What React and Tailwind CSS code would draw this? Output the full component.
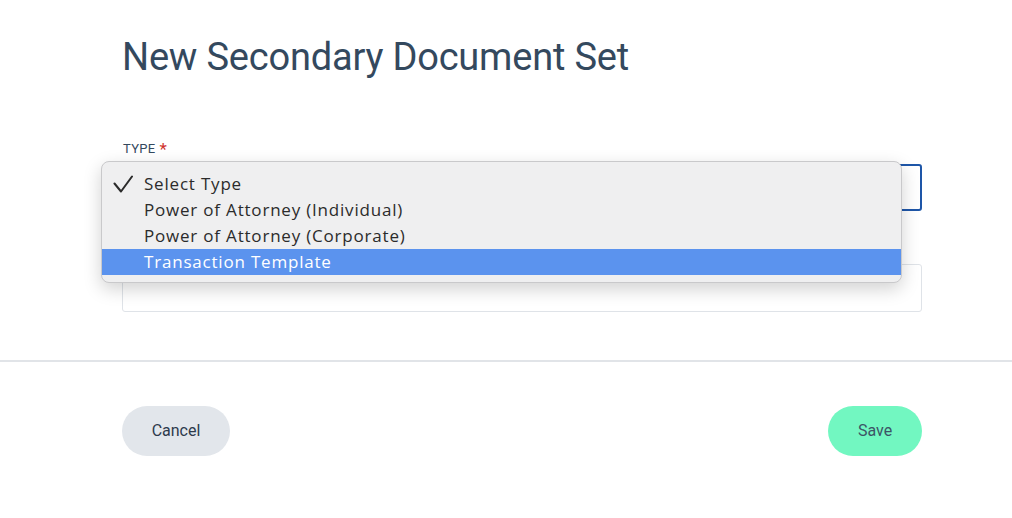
const options = [
  { label: "Select Type", checked: true },
  { label: "Power of Attorney (Individual)" },
  { label: "Power of Attorney (Corporate)" },
  { label: "Transaction Template", active: true },
];

function TypeMenu() {
  return (
    <div
      className="absolute left-[-21px] top-[-3px] w-[801px] rounded-[8px] border border-[#c9c9cb] bg-[#efeff0] pt-[9px] pb-[7px] shadow-[0_6px_18px_rgba(0,0,0,0.18)] z-10"
      style={{ fontFamily: "'Open Sans', 'Liberation Sans', sans-serif" }}
    >
      {options.map((o) => (
        <div
          key={o.label}
          className={`flex h-[26px] items-center ${
            o.active ? "bg-[#5b93ee] text-white" : "text-[#2b2b2b]"
          }`}
        >
          <span className="flex w-[42px] pl-[11px]">
            {o.checked && (
              <svg width="20" height="18" viewBox="0 0 20 18" fill="none">
                <path d="M1.5 8.5 L8 16.5 L19 1.5" stroke="#2b2b2b" strokeWidth="2" strokeLinecap="round" strokeLinejoin="round" />
              </svg>
            )}
          </span>
          <span className="text-[17px] tracking-[0.8px]">{o.label}</span>
        </div>
      ))}
    </div>
  );
}

export default function App() {
  return (
    <div
      className="min-h-[518px] w-[1012px] bg-white"
      style={{ fontFamily: "Roboto, 'Liberation Sans', sans-serif" }}
    >
      <div className="w-[800px] ml-[122px] pt-[33px]">
        <h1 className="text-[38px] leading-[48px] text-[#34495e] tracking-[-0.2px] font-normal">
          New Secondary Document Set
        </h1>

        {/* type field */}
        <div className="mt-[59px]">
          <label className="flex items-center h-[18px] text-[13px] text-[#34495e] uppercase tracking-[0.3px] pl-[1px]">
            Type<span className="ml-[4px] text-[#d0342c] text-[17px] leading-none">*</span>
          </label>
          <div className="relative mt-[6px]">
            <div className="h-[47px] rounded-[3px] border-2 border-[#1e56a8]" />
            <TypeMenu />
          </div>
        </div>

        {/* second field, label hidden by menu */}
        <div className="mt-[53px] h-[48px] rounded-[3px] border border-[#dfe3e8]" />
      </div>

      <div className="mt-[48px] border-t-2 border-[#e1e4e8]" />

      <div className="w-[800px] ml-[122px] mt-[44px] flex justify-between">
        <button className="h-[50px] w-[108px] rounded-full bg-[#e2e6eb] text-[16px] text-[#2d3a4b]">
          Cancel
        </button>
        <button className="h-[50px] w-[94px] rounded-full bg-[#72f7c1] text-[16px] text-[#3c5466]">
          Save
        </button>
      </div>
    </div>
  );
}
